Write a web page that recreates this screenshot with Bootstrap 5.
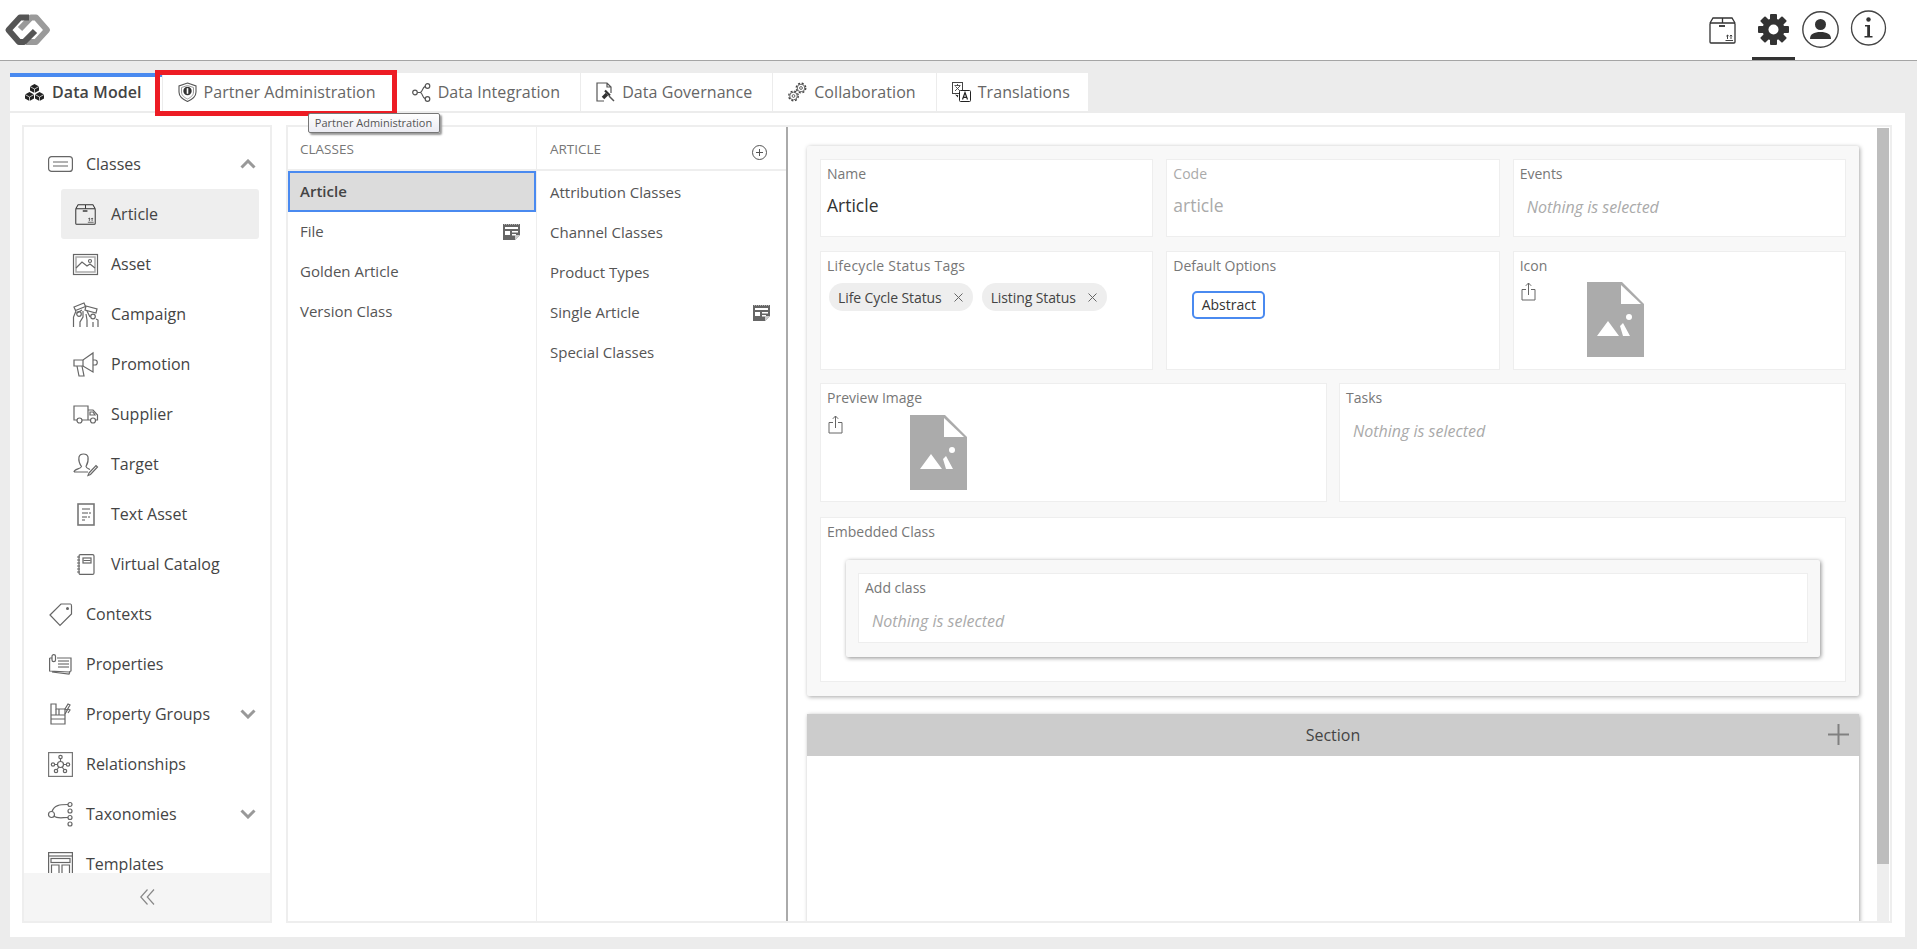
<!DOCTYPE html>
<html lang="en">
<head>
<meta charset="utf-8">
<title>Data Model</title>
<link href="https://cdn.jsdelivr.net/npm/bootstrap@5.3.0/dist/css/bootstrap.min.css" rel="stylesheet">
<style>
html,body{height:100%;}
body{background:#ececec;font-family:"Open Sans","Liberation Sans",sans-serif;color:#444;overflow:hidden;font-size:16px;}
svg{display:block;flex:none;overflow:visible;}
.ln{fill:none;stroke:#555;stroke-width:1.2;}
.ln2{fill:none;stroke:#666;stroke-width:1.2;}
.top-bar{height:61px;flex:none;background:#fff;border-bottom:1px solid #a5a5a5;padding-left:5px;}
.top-tools{margin-left:auto;padding-right:31px;height:100%;}
.tool-box{margin-top:17px;}
.tool-gear{height:100%;width:43px;margin:0 7px 0 16px;border-bottom:3px solid #333;padding-top:14px;}
.tool-user{margin-top:11px;}
.tool-info{margin:10px 0 0 12px;}
.tab-strip{margin:12px 0 2px 10px;gap:1px;height:38px;flex:none;letter-spacing:.06px;}
.app-tab{background:#fff;padding:0 20px 0 15px;gap:7px;color:#666;position:relative;white-space:nowrap;}
.app-tab:last-child{padding-right:18px;}
.app-tab.on{border-top:4px solid #4a8af0;font-weight:600;color:#444;gap:8px;padding-bottom:4px;}
.red-mark{position:absolute;left:-8px;top:-3px;width:242px;height:46px;border:5px solid #ed1c24;pointer-events:none;}
.tip-box{position:absolute;left:145px;top:40px;height:20px;width:132px;font-size:11px;line-height:18px;text-align:center;color:#555;background:linear-gradient(#fff,#ebebf2);border:1px solid #777;border-radius:2px;box-shadow:2px 2px 2px #999;z-index:5;font-weight:400;letter-spacing:0;}
.work{background:#fff;margin:0 12px 12px 10px;padding:12px 13px 14px 12px;gap:14px;min-height:0;}
.side{width:250px;border:2px solid #eee;min-height:0;}
.side-scroll{flex:1;min-height:0;overflow:hidden;padding:12px 11px 0 24px;}
.side-row{height:50px;color:#444;}
.side-ico{width:25px;margin-right:13px;display:flex;justify-content:center;}
.side-sub{margin-left:13px;padding-left:12px;border-radius:3px;}
.side-sub.on{background:#eee;}
.chev{margin-left:auto;margin-right:3px;}
.side-foot{height:48px;flex:none;background:#f5f5f5;}
.board{flex:1;min-width:0;border:2px solid #eee;min-height:0;}
.col-a{width:249px;border-right:1px solid #eee;flex:none;font-size:15px;color:#555;}
.col-b{width:251px;border-right:2px solid #aaa;flex:none;font-size:15px;color:#555;}
.col-head{height:44px;border-bottom:2px solid #eee;font-size:13.5px;color:#777;padding:13px 0 0 12px;line-height:18px;position:relative;}
.col-b .col-head{padding-left:13px;}
.add-btn{position:absolute;right:19px;top:18px;}
.col-row{height:40px;padding:0 16px 2px 12px;}
.col-b .col-row{padding-left:13px;}
.col-b .col-list{padding-top:2px;}
.col-row.on{height:41px;background:#dcdcdc;border:2px solid #4a8af0;font-weight:600;padding:0 16px 0 10px;color:#444;}
.detail{flex:1;min-width:0;overflow:hidden;padding:19px 18px 0 19px;}
.sheet{background:#f8f8f8;border-radius:2px;box-shadow:1px 1px 4px rgba(0,0,0,.35);padding:13px 13px 14px 13px;}
.field-row{gap:13px;}
.field{flex:1;min-width:0;background:#fff;border:1px solid #eee;padding:4px 6px;font-size:14px;color:#777;line-height:19px;}
.h-a{height:78px;margin-bottom:14px;}
.h-b{height:119px;margin-bottom:13px;}
.h-c{height:119px;margin-bottom:15px;gap:12px;}
.val{font-size:17.5px;line-height:24px;color:#333;margin-top:10px;}
.dim,.dim .val{color:#aaa;}
.none{font-size:16px;font-style:italic;color:#aaa;line-height:22px;margin:13px 0 0 7px;}
.wide-label{letter-spacing:.25px;}
.chips{gap:9px;margin:8px 0 0 2px;}
.chip-item{height:28px;background:#eee;border-radius:14px;padding:0 10px 0 9px;gap:12px;color:#444;white-space:nowrap;letter-spacing:-.1px;}
.flag-btn{display:inline-block;margin:16px 0 0 19px;height:28px;line-height:24px;width:73px;text-align:center;border:2px solid #4a8af0;border-radius:5px;color:#333;}
.slot{margin-top:7px;padding-left:1px;}
.slot-b{margin-top:8px;}
.blank-a{margin-left:51px;}
.blank-b{margin-left:67px;}
.h-e{height:165px;}
.inner-sheet{margin:19px 19px 0 19px;height:97px;background:#f8f8f8;border-radius:2px;box-shadow:1px 1px 4px rgba(0,0,0,.45);padding:13px 12px 14px 12px;}
.inner-field{height:70px;}
.section-sheet{margin-top:18px;height:400px;background:#fff;box-shadow:1px 1px 4px rgba(0,0,0,.35);}
.section-head{height:42px;background:#ccc;color:#444;font-size:16px;position:relative;}
.section-add{position:absolute;right:10px;top:10px;}
.rail{width:12px;margin:1px 1px 0 0;flex:none;background:#eee;}
.rail-thumb{height:736px;background:#bdbdbd;}
</style>
</head>
<body class="d-flex flex-column">
<svg width="0" height="0" class="position-absolute">
<defs>
<symbol id="i-box" viewBox="0 0 27 27"><g fill="none" stroke="#333" stroke-width="1.300"><rect x="1" y="6" width="25" height="20" rx="1"/><path d="M1 6 4 1H23L26 6M13.5 1V6"/></g><rect x="10" y="8" width="6" height="2" fill="#444"/><path d="M16.500 23.500H24M18.500 22V18M22 22V18M17.300 19.200 18.500 18 19.700 19.200M20.800 19.200 22 18 23.200 19.200" fill="none" stroke="#444"/></symbol>
<symbol id="i-page" viewBox="0 0 17 17"><path d="M0 1H17V12L12 17H0Z" fill="#666"/><path d="M1 1H16" stroke="#fff" stroke-dasharray="1 1"/><rect x="2" y="4" width="13" height="2" fill="#fff"/><rect x="2" y="8" width="5" height="4" fill="#fff"/><rect x="9" y="8" width="6" height="1.500" fill="#fff"/><rect x="9" y="11" width="4" height="1.500" fill="#fff"/><path d="M12 17V12H17Z" fill="#ccc"/></symbol>
<symbol id="i-share" viewBox="0 0 15 19"><path d="M5 7.500H1V18H14V7.500H10M7.500 13V1M4.800 3.800 7.500 1 10.200 3.800" fill="none" stroke="#666"/></symbol>
<symbol id="i-blank" viewBox="0 0 57 75"><path d="M0 0H35L57 22V75H0Z" fill="#ababab"/><path d="M34 3 54 22H34Z" fill="#fff"/><circle cx="42" cy="35" r="3" fill="#fff"/><path d="M10 54 21 39 32 54ZM33 44 36 41 43 54H36Z" fill="#fff"/></symbol>
<symbol id="i-down" viewBox="0 0 16 10"><path d="M1.500 1.500 8 8 14.500 1.500" fill="none" stroke="#999" stroke-width="3"/></symbol>
</defs>
</svg>

<header class="top-bar d-flex align-items-center">
  <svg width="46" height="32" viewBox="0 0 46 32"><path d="M21 28H31L42 16 31 3.500H26L15 15" fill="none" stroke="#9a9a9a" stroke-width="6" stroke-linejoin="round"/><path d="M24 3.500H15L3.500 16 14 28H19L30 17" fill="none" stroke="#555" stroke-width="6" stroke-linejoin="round"/></svg>
  <div class="top-tools d-flex align-items-start">
    <svg class="tool-box" width="27" height="27"><use href="#i-box"/></svg>
    <div class="tool-gear d-flex justify-content-center">
      <svg width="31" height="31" viewBox="-15.500 -15.500 31 31"><g fill="#333"><circle r="11"/><rect x="-3.500" y="-15.500" width="7" height="31" rx="1"/><rect x="-3.500" y="-15.500" width="7" height="31" rx="1" transform="rotate(45)"/><rect x="-3.500" y="-15.500" width="7" height="31" rx="1" transform="rotate(90)"/><rect x="-3.500" y="-15.500" width="7" height="31" rx="1" transform="rotate(135)"/></g><circle r="5" fill="#fff"/></svg>
    </div>
    <svg class="tool-user" width="37" height="37" viewBox="0 0 37 37"><circle cx="18.500" cy="18.500" r="17.700" fill="none" stroke="#444" stroke-width="1.400"/><circle cx="18.500" cy="13.500" r="5.500" fill="#333"/><path d="M8 28C8 23 12 21 18.500 21S29 23 29 28Z" fill="#333"/></svg>
    <svg class="tool-info" width="35" height="36" viewBox="0 0 35 36"><circle cx="17.500" cy="18" r="17" fill="none" stroke="#444" stroke-width="1.300"/><circle cx="17.500" cy="9.500" r="2.200" fill="#333"/><path d="M14 15H19V26H21.500V27.500H13.500V26H16.200V16.500H14Z" fill="#333"/></svg>
  </div>
</header>

<nav class="tab-strip d-flex">
  <div class="app-tab on d-flex align-items-center">
    <svg width="19" height="17" viewBox="0 0 19 17"><g fill="#222"><path d="M9.500 0 14 2.500V6.500L9.500 9 5 6.500V2.500Z"/><path d="M4.500 8 9 10.500V14.500L4.500 17 0 14.500V10.500Z"/><path d="M14.500 8 19 10.500V14.500L14.500 17 10 14.500V10.500Z"/></g><path d="M5 2.500 9.500 5 14 2.500M9.500 5V9M0 10.500 4.500 13 9 10.500M4.500 13V17M10 10.500 14.500 13 19 10.500M14.500 13V17" stroke="#fff" stroke-width=".7" fill="none"/></svg>
    <span>Data Model</span>
  </div>
  <div class="app-tab d-flex align-items-center">
    <svg width="19" height="20" viewBox="0 0 19 20"><path d="M9.500 1 18 4V10C18 15 14 17.500 9.500 19.500 5 17.500 1 15 1 10V4Z" fill="none" stroke="#555" stroke-width="1.100"/><path d="M9.500 3.500 15.500 5.500V10C15.500 13.500 12.500 15.500 9.500 17 6.500 15.500 3.500 13.500 3.500 10V5.500Z" fill="none" stroke="#999"/><circle cx="9.500" cy="9" r="4.200" fill="#333"/><rect x="8.700" y="6.200" width="1.600" height="5.600" fill="#fff"/></svg>
    <span>Partner Administration</span>
    <div class="red-mark"></div>
    <div class="tip-box">Partner Administration</div>
  </div>
  <div class="app-tab d-flex align-items-center">
    <svg width="19" height="19" viewBox="0 0 19 19"><g class="ln"><circle cx="3" cy="9.500" r="2.300"/><circle cx="15.500" cy="3" r="2.300"/><circle cx="15.500" cy="16" r="2.300"/><path d="M5.300 9.500H8C11 9.500 10 4 13.200 3.300M8 9.500C11 9.500 10 15 13.200 15.700"/></g></svg>
    <span>Data Integration</span>
  </div>
  <div class="app-tab d-flex align-items-center">
    <svg width="19" height="20" viewBox="0 0 19 20"><path class="ln" d="M8 19H1V1H11L15 5V11M11 1V5H15"/><path d="M7 16 11 12" stroke="#333" stroke-width="3.500"/><path d="M9 8.500 14 13.500" stroke="#333" stroke-width="2.200"/><path d="M13 14 18 19" stroke="#555" stroke-width="1.500"/></svg>
    <span>Data Governance</span>
  </div>
  <div class="app-tab d-flex align-items-center">
    <svg width="19" height="20" viewBox="0 0 19 20"><g fill="none" stroke="#555" stroke-width=".9"><circle cx="13" cy="6" r="3.800"/><circle cx="13" cy="6" r="1.400"/><circle cx="5.500" cy="14" r="3.800"/><circle cx="5.500" cy="14" r="1.400"/></g><circle cx="13" cy="6" r="4.800" fill="none" stroke="#444" stroke-width="1.300" stroke-dasharray="2 1.800"/><circle cx="5.500" cy="14" r="4.800" fill="none" stroke="#444" stroke-width="1.300" stroke-dasharray="2 1.800"/></svg>
    <span>Collaboration</span>
  </div>
  <div class="app-tab d-flex align-items-center">
    <svg width="19" height="20" viewBox="0 0 19 20"><rect x=".5" y=".5" width="10" height="11" fill="#fff" stroke="#444"/><path d="M2.500 3.500H8.500M5.500 2V3.500M3 9 8 4M3.500 4.500 8 9" stroke="#444" stroke-width=".9" fill="none"/><rect x="7.500" y="8.500" width="11" height="11" rx="1" fill="#fff" stroke="#222"/><path d="M10.500 17.500 13 10.500 15.500 17.500M11.300 15.300H14.700" stroke="#222" stroke-width="1.200" fill="none"/><path d="M3 12.500 6 15.500V13.500H7" fill="#222"/></svg>
    <span>Translations</span>
  </div>
</nav>

<main class="work flex-grow-1 d-flex">
  <aside class="side d-flex flex-column">
    <div class="side-scroll">
      <ul class="list-unstyled m-0">
        <li class="side-row d-flex align-items-center"><span class="side-ico"><svg width="25" height="16" viewBox="0 0 25 16"><rect x=".6" y=".6" width="23.800" height="14.800" rx="3" class="ln2"/><path d="M5 6H20M5 10H20" class="ln2"/></svg></span>Classes<svg class="chev" width="16" height="10"><use href="#i-down" transform="rotate(180 8 5)"/></svg></li>
        <li class="side-row side-sub on d-flex align-items-center"><span class="side-ico"><svg width="21" height="21"><use href="#i-box"/></svg></span>Article</li>
        <li class="side-row side-sub d-flex align-items-center"><span class="side-ico"><svg width="25" height="21" viewBox="0 0 25 21"><rect x=".5" y=".5" width="24" height="20" class="ln2"/><rect x="3" y="3" width="19" height="15" fill="none" stroke="#aaa" stroke-width="1.500"/><path d="M3 14 9 8 14 12 17 10 22 14" class="ln2"/><circle cx="17" cy="7" r="1.500" class="ln2"/></svg></span>Asset</li>
        <li class="side-row side-sub d-flex align-items-center"><span class="side-ico"><svg width="25" height="25" viewBox="0 0 25 25"><g class="ln2"><path d="M1 5 11 1 12.500 4.500 2.500 8.500Z"/><path d="M13 4 24 7 23 11 12 8Z"/><circle cx="6" cy="12" r="2.300"/><circle cx="20" cy="14.500" r="2.300"/><path d="M.5 25V15L3 9M7 25V20L10 15 10 9M9 8 4 11M14 25V18L13 12M14 9 17 15M25 25V18L23 17M20 25V20"/></g></svg></span>Campaign</li>
        <li class="side-row side-sub d-flex align-items-center"><span class="side-ico"><svg width="25" height="25" viewBox="0 0 25 25"><g class="ln2"><path d="M1 8H10L20 1V20L10 14H1Z"/><path d="M4 14 6 24H11L9 14M10 8V14M20 8H22C25 8 25 13 22 13H20"/></g></svg></span>Promotion</li>
        <li class="side-row side-sub d-flex align-items-center"><span class="side-ico"><svg width="25" height="19" viewBox="0 0 25 19"><g class="ln2"><path d="M4 15H1V1H15V15H9M15 5H20L24.500 10V15H22.500M15 15H17"/><circle cx="6.500" cy="15.500" r="2.500"/><circle cx="20" cy="15.500" r="2.500"/><path d="M17 7H20L22 10H17Z"/></g></svg></span>Supplier</li>
        <li class="side-row side-sub d-flex align-items-center"><span class="side-ico"><svg width="25" height="23" viewBox="0 0 25 23"><g class="ln2"><path d="M1 19C1 16 8 16 8.500 13.500 6 10 5.500 7 6 4 7 0 14 0 15 4 15.500 7 15 10 13 13.500 13.200 15 15 15.500 17 16.500M1 19H15"/><path d="M16 20 23 12.500 24.500 14 17.500 21.500 15 22.500Z"/></g></svg></span>Target</li>
        <li class="side-row side-sub d-flex align-items-center"><span class="side-ico"><svg width="18" height="23" viewBox="0 0 18 23"><rect x="1" y="1" width="16" height="21" fill="none" stroke="#777" stroke-width="1.600"/><path d="M5 6H13M5 10H11M12 10H14M5 14H10M11 14H13M5 17H8" stroke="#555" fill="none"/></svg></span>Text Asset</li>
        <li class="side-row side-sub d-flex align-items-center"><span class="side-ico"><svg width="18" height="21" viewBox="0 0 18 21"><rect x="2" y=".6" width="15" height="19.800" rx="1.500" class="ln2"/><rect x="6" y="4" width="8" height="5" class="ln2"/><path d="M6.500 6.500H13.500M0 3H3M0 6H3M0 9H3M0 12H3M0 15H3M0 18H3" class="ln2"/></svg></span>Virtual Catalog</li>
        <li class="side-row d-flex align-items-center"><span class="side-ico"><svg width="23" height="23" viewBox="0 0 23 23"><path class="ln2" d="M1 12 12 1H21.500C22.500 1 22.500 2 22.500 3V11L11 22.500Z"/><circle cx="18.500" cy="5.500" r="1.500" fill="#666"/></svg></span>Contexts</li>
        <li class="side-row d-flex align-items-center"><span class="side-ico"><svg width="23" height="21" viewBox="0 0 23 21"><path class="ln2" d="M.6 4V17L20 18 22 17V4H8M.6 4H3M3 18 20 20 21 18"/><path d="M9 7H20M9 10H20M9 13H20" stroke="#555" fill="none"/><rect x="3" y=".6" width="3.500" height="7" rx="1.700" class="ln2"/></svg></span>Properties</li>
        <li class="side-row d-flex align-items-center"><span class="side-ico"><svg width="21" height="22" viewBox="0 0 21 22"><g class="ln2"><path d="M1 1H6V6H15V21H1Z"/><path d="M1 12H15M1 16H15M6 6V12M9 6V12" /><path d="M15 6 18 1 20 2 17 7Z M15 11 18 6 20 7 18 10"/></g></svg></span>Property Groups<svg class="chev" width="16" height="10"><use href="#i-down"/></svg></li>
        <li class="side-row d-flex align-items-center"><span class="side-ico"><svg width="25" height="25" viewBox="0 0 25 25"><rect x=".6" y=".6" width="23.800" height="23.800" fill="none" stroke="#777" stroke-width="1.200"/><g class="ln2"><circle cx="12.500" cy="12.500" r="3"/><circle cx="12.500" cy="5" r="1.700"/><circle cx="5" cy="12.500" r="1.700"/><circle cx="20" cy="12.500" r="1.700"/><circle cx="8" cy="19" r="1.700"/><circle cx="17" cy="19" r="1.700"/><path d="M12.500 7V9.500M7 12.500H9.500M15.500 12.500H18M11 15 9 17.500M14 15 16 17.500"/></g></svg></span>Relationships</li>
        <li class="side-row d-flex align-items-center"><span class="side-ico"><svg width="25" height="25" viewBox="0 0 25 25"><g class="ln2"><circle cx="3.500" cy="12.500" r="3"/><circle cx="22" cy="2.500" r="2"/><circle cx="22" cy="9" r="2"/><circle cx="22" cy="15.500" r="2"/><circle cx="22" cy="22" r="2"/><path d="M4 9.500C6 3 12 2.500 20 2.500M6 14C9 17 14 15.500 20 15.500"/></g></svg></span>Taxonomies<svg class="chev" width="16" height="10"><use href="#i-down"/></svg></li>
        <li class="side-row d-flex align-items-center"><span class="side-ico"><svg width="25" height="25" viewBox="0 0 25 25"><g class="ln2"><rect x=".6" y=".6" width="23.800" height="23.800"/><path d="M.6 4H24.400"/><rect x="3" y="6.500" width="19" height="4"/><path d="M3.500 25V13H11V25M14 25V13H21.500V25"/></g></svg></span>Templates</li>
      </ul>
    </div>
    <div class="side-foot d-flex align-items-center justify-content-center">
      <svg width="15" height="16" viewBox="0 0 15 16"><path d="M7.500 .5 .8 8 7.500 15.500M14 .5 7.300 8 14 15.500" fill="none" stroke="#888" stroke-width="1.200"/></svg>
    </div>
  </aside>

  <section class="board d-flex">
    <div class="col-a">
      <div class="col-head">CLASSES</div>
      <div class="col-list">
        <div class="col-row on d-flex align-items-center">Article</div>
        <div class="col-row d-flex align-items-center justify-content-between">File<svg width="17" height="17"><use href="#i-page"/></svg></div>
        <div class="col-row d-flex align-items-center">Golden Article</div>
        <div class="col-row d-flex align-items-center">Version Class</div>
      </div>
    </div>
    <div class="col-b">
      <div class="col-head">ARTICLE
        <svg class="add-btn" width="15" height="15" viewBox="0 0 15 15"><circle cx="7.500" cy="7.500" r="7" fill="none" stroke="#555"/><path d="M7.500 4V11M4 7.500H11" stroke="#555" fill="none"/></svg>
      </div>
      <div class="col-list">
        <div class="col-row d-flex align-items-center">Attribution Classes</div>
        <div class="col-row d-flex align-items-center">Channel Classes</div>
        <div class="col-row d-flex align-items-center">Product Types</div>
        <div class="col-row d-flex align-items-center justify-content-between">Single Article<svg width="17" height="17"><use href="#i-page"/></svg></div>
        <div class="col-row d-flex align-items-center">Special Classes</div>
      </div>
    </div>
    <div class="detail">
      <div class="sheet">
        <div class="field-row h-a d-flex">
          <div class="field">Name<div class="val">Article</div></div>
          <div class="field dim">Code<div class="val">article</div></div>
          <div class="field">Events<div class="none">Nothing is selected</div></div>
        </div>
        <div class="field-row h-b d-flex">
          <div class="field"><span class="wide-label">Lifecycle Status Tags</span>
            <div class="chips d-flex">
              <span class="chip-item d-flex align-items-center">Life Cycle Status<svg width="9" height="9" viewBox="0 0 9 9"><path d="M.5 .5 8.500 8.500M8.500 .5 .5 8.500" stroke="#666" fill="none"/></svg></span>
              <span class="chip-item d-flex align-items-center">Listing Status<svg width="9" height="9" viewBox="0 0 9 9"><path d="M.5 .5 8.500 8.500M8.500 .5 .5 8.500" stroke="#666" fill="none"/></svg></span>
            </div>
          </div>
          <div class="field">Default Options<div><span class="flag-btn">Abstract</span></div></div>
          <div class="field">Icon
            <div class="slot d-flex"><svg width="15" height="19"><use href="#i-share"/></svg><svg class="blank-a" width="57" height="75"><use href="#i-blank"/></svg></div>
          </div>
        </div>
        <div class="field-row h-c d-flex">
          <div class="field">Preview Image
            <div class="slot slot-b d-flex"><svg width="15" height="19"><use href="#i-share"/></svg><svg class="blank-b" width="57" height="75"><use href="#i-blank"/></svg></div>
          </div>
          <div class="field">Tasks<div class="none">Nothing is selected</div></div>
        </div>
        <div class="field-row h-e d-flex">
          <div class="field">Embedded Class
            <div class="inner-sheet">
              <div class="field inner-field">Add class<div class="none">Nothing is selected</div></div>
            </div>
          </div>
        </div>
      </div>
      <div class="section-sheet">
        <div class="section-head d-flex align-items-center justify-content-center">Section
          <svg class="section-add" width="21" height="21" viewBox="0 0 21 21"><path d="M10.500 0V21M0 10.500H21" stroke="#808080" stroke-width="2" fill="none"/></svg>
        </div>
      </div>
    </div>
    <div class="rail"><div class="rail-thumb"></div></div>
  </section>
</main>
<script src="https://cdn.jsdelivr.net/npm/bootstrap@5.3.0/dist/js/bootstrap.bundle.min.js"></script>
</body>
</html>
